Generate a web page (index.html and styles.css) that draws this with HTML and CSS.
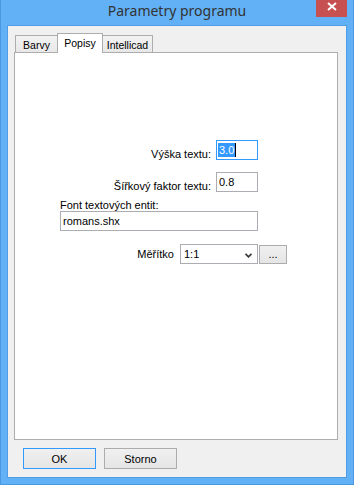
FILE: index.html
```html
<!DOCTYPE html>
<html>
	<head>
		<meta charset="utf-8">
		<link rel="stylesheet" href="styles.css">
	</head>
	<body>
		<div class="window">
			<div class="titlebar">
				<span></span>
				<span class="title">Parametry programu</span>
				<div class="close">
					<svg width="31" height="17" viewBox="0 0 31 17">
						<path d="M12 3 L20 10 M20 3 L12 10" stroke="#fff" stroke-width="2" fill="none"/>
					</svg>
				</div>
			</div>
			<div class="client">
				<div class="tabs">
					<div class="tab tab_barvy">Barvy</div>
					<div class="tab tab_popisy selected">Popisy</div>
					<div class="tab tab_icad">Intellicad</div>
				</div>
				<div class="panel">
					<div class="form">
						<div class="row">
							<label>Výška textu:</label>
							<div class="edit small focus"><span class="sel">3.0</span><span class="caret"></span></div>
						</div>
						<div class="row">
							<label>Šířkový faktor textu:</label>
							<div class="edit small">0.8</div>
						</div>
						<div class="font_label">Font textových entit:</div>
						<div class="edit wide">romans.shx</div>
						<div class="scale_row">
							<label>Měřítko</label>
							<div class="combo">
								<span>1:1</span>
								<svg width="7" height="5" viewBox="0 0 7 5">
									<polyline points="0.5,0.8 3.5,3.8 6.5,0.8" stroke="#3c3c3c" stroke-width="1.8" fill="none"/>
								</svg>
							</div>
							<div class="dots">...</div>
						</div>
					</div>
				</div>
				<div class="buttons">
					<div class="btn default">OK</div>
					<div class="btn">Storno</div>
				</div>
			</div>
		</div>
	</body>
</html>
```

FILE: styles.css
```css
* {
	box-sizing: border-box;
}

body {
	margin: 0;
	font-family: "Liberation Sans", Arial, sans-serif;
	font-size: 11px;
	color: #000;
}

.window {
	width: 354px;
	height: 485px;
	display: flex;
	flex-direction: column;
	background: #62b0f5;
	border: 1px solid #4a98e2;
	border-top: 0;
	padding: 0 6px 6px 6px;
}

.titlebar {
	height: 25px;
	display: grid;
	grid-template-columns: 1fr auto 1fr;
}
.title {
	font-family: "Noto Sans", sans-serif;
	font-size: 14px;
	line-height: 19px;
	padding-top: 1px;
	color: #333;
	white-space: nowrap;
}
.close {
	justify-self: end;
	width: 31px;
	height: 17px;
	background: #c75050;
}
.close svg {
	display: block;
}

.client {
	flex: 1;
	display: flex;
	flex-direction: column;
	background: #f0f0f0;
	border: 1px solid #4f9de6;
	padding: 7px 8px 0 6px;
}

.tabs {
	height: 20px;
	display: flex;
	align-items: flex-end;
	padding-left: 1px;
	margin-bottom: -1px;
	position: relative;
	z-index: 1;
}
.tab {
	height: 17px;
	margin-bottom: 1px;
	border: 1px solid #adadad;
	border-bottom: 0;
	background: linear-gradient(#f2f2f2, #e8e8e8);
	font-size: 10.5px;
	line-height: 14px;
	padding-top: 2px;
	text-align: center;
	white-space: nowrap;
}
.tab_barvy {
	width: 43px;
}
.tab_popisy {
	width: 46px;
	margin-left: -1px;
}
.tab_icad {
	width: 51px;
	margin-left: -1px;
}
.tab.selected {
	height: 20px;
	margin-bottom: 0;
	background: #fff;
	position: relative;
	z-index: 2;
}

.panel {
	height: 388px;
	border: 1px solid #adadad;
	background: #fff;
}

.form {
	padding: 87px 0 0 45px;
	width: 243px;
}

.row {
	height: 20px;
	display: flex;
	justify-content: flex-end;
	align-items: flex-end;
	gap: 5px;
}
.row + .row {
	margin-top: 12px;
}
.row label {
	line-height: 12px;
}

.edit {
	height: 20px;
	border: 1px solid #abadb3;
	background: #fff;
	padding: 2px 0 0 2px;
	line-height: 14px;
	white-space: nowrap;
}
.edit.small {
	width: 42px;
}
.edit.wide {
	width: 198px;
}
.edit.focus {
	border-color: #3399ff;
	padding-left: 1px;
}
.sel {
	display: inline-block;
	vertical-align: top;
	background: #3399ff;
	color: #fff;
	padding: 0 1px;
}
.caret {
	display: inline-block;
	vertical-align: top;
	width: 1px;
	height: 14px;
	background: #000;
}

.font_label {
	margin-top: 7px;
	line-height: 12px;
}

.scale_row {
	width: 227px;
	margin-top: 13px;
	display: flex;
	justify-content: flex-end;
	align-items: center;
}
.scale_row label {
	line-height: 12px;
	margin-right: 6px;
}
.combo {
	width: 78px;
	height: 20px;
	border: 1px solid #abadb3;
	background: #fff;
	display: flex;
	align-items: center;
	justify-content: space-between;
	padding: 0 5px 0 3px;
	line-height: 14px;
}
.combo svg {
	display: block;
	margin-top: 2px;
}
.dots {
	width: 28px;
	height: 19px;
	margin-left: 1px;
	border: 1px solid #acacac;
	background: linear-gradient(#f0f0f0, #e5e5e5);
	text-align: center;
	line-height: 16px;
}

.buttons {
	display: flex;
	gap: 8px;
	margin-top: 8px;
	padding-left: 9px;
}
.btn {
	width: 73px;
	height: 21px;
	border: 1px solid #acacac;
	background: linear-gradient(#f0f0f0, #e5e5e5);
	text-align: center;
	padding-top: 1px;
	line-height: 18px;
}
.btn.default {
	border-color: #3399ff;
}
```
